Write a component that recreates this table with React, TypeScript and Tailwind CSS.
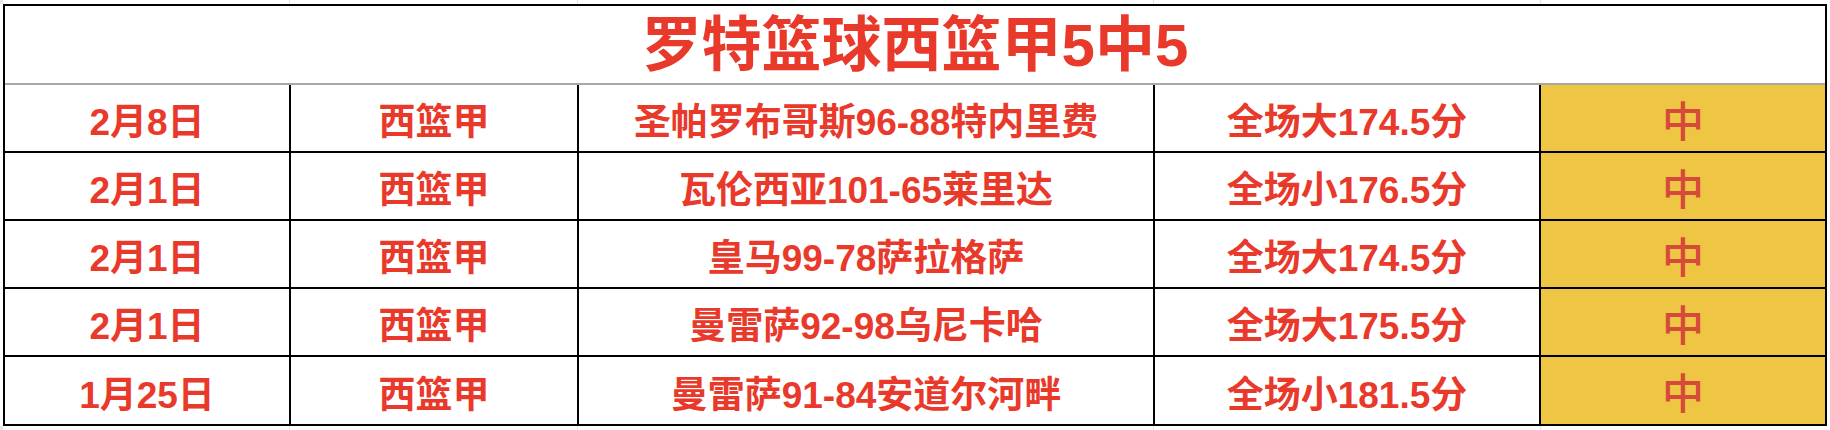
import React from 'react';

interface Row {
  date: string;
  league: string;
  match: string;
  pick: string;
  result: string;
}

const rows: Row[] = [
  { date: '2月8日', league: '西篮甲', match: '圣帕罗布哥斯96-88特内里费', pick: '全场大174.5分', result: '中' },
  { date: '2月1日', league: '西篮甲', match: '瓦伦西亚101-65莱里达', pick: '全场小176.5分', result: '中' },
  { date: '2月1日', league: '西篮甲', match: '皇马99-78萨拉格萨', pick: '全场大174.5分', result: '中' },
  { date: '2月1日', league: '西篮甲', match: '曼雷萨92-98乌尼卡哈', pick: '全场大175.5分', result: '中' },
  { date: '1月25日', league: '西篮甲', match: '曼雷萨91-84安道尔河畔', pick: '全场小181.5分', result: '中' },
];

const font = { fontFamily: '"Liberation Sans", "Noto Sans CJK SC", sans-serif' };

const cell = 'border-r-2 border-black flex items-center justify-center pt-[9px] text-[37px] font-bold text-[#e9392b] leading-none';

const App: React.FC = () => {
  return (
    <div className="w-[1830px] h-[430px] bg-white overflow-hidden" style={font}>
      {/* faint sheet gridlines above the table */}
      <div className="h-[4px] flex">
        <div className="w-[3px] bg-[#e6e6e6]" />
        <div className="w-[287px] border-r border-[#e6e6e6]" />
        <div className="w-[288px] border-r border-[#e6e6e6]" />
        <div className="w-[576px] border-r border-[#e6e6e6]" />
        <div className="w-[387px] border-r border-[#e6e6e6]" />
      </div>
      <div className="ml-[3px] w-[1824px] h-[422px] border-2 border-black flex flex-col">
        <div className="h-[79px] border-b-2 border-[#a8a8a8] flex items-center justify-center pt-[2px]">
          <h1 className="text-[60px] leading-none font-bold text-[#e9392b]">罗特篮球西篮甲5中5</h1>
        </div>
        {rows.map((row, i) => (
          <div
            key={i}
            className={
              'grid grid-cols-[286px_288px_576px_386px_1fr] ' +
              (i < rows.length - 1 ? 'h-[68px] border-b-2 border-black' : 'flex-1')
            }
          >
            <div className={cell}>{row.date}</div>
            <div className={cell}>{row.league}</div>
            <div className={cell}>{row.match}</div>
            <div className={cell}>{row.pick}</div>
            <div className="bg-[#efc544] flex items-center justify-center pt-[9px] text-[42px] font-medium text-[#d64a3b] leading-none">
              {row.result}
            </div>
          </div>
        ))}
      </div>
      {/* faint sheet gridlines below the table */}
      <div className="h-[4px] flex">
        <div className="w-[3px] bg-[#e6e6e6]" />
        <div className="w-[287px] border-r border-[#e6e6e6]" />
        <div className="w-[288px] border-r border-[#e6e6e6]" />
        <div className="w-[576px] border-r border-[#e6e6e6]" />
        <div className="w-[387px] border-r border-[#e6e6e6]" />
      </div>
    </div>
  );
};

export default App;
